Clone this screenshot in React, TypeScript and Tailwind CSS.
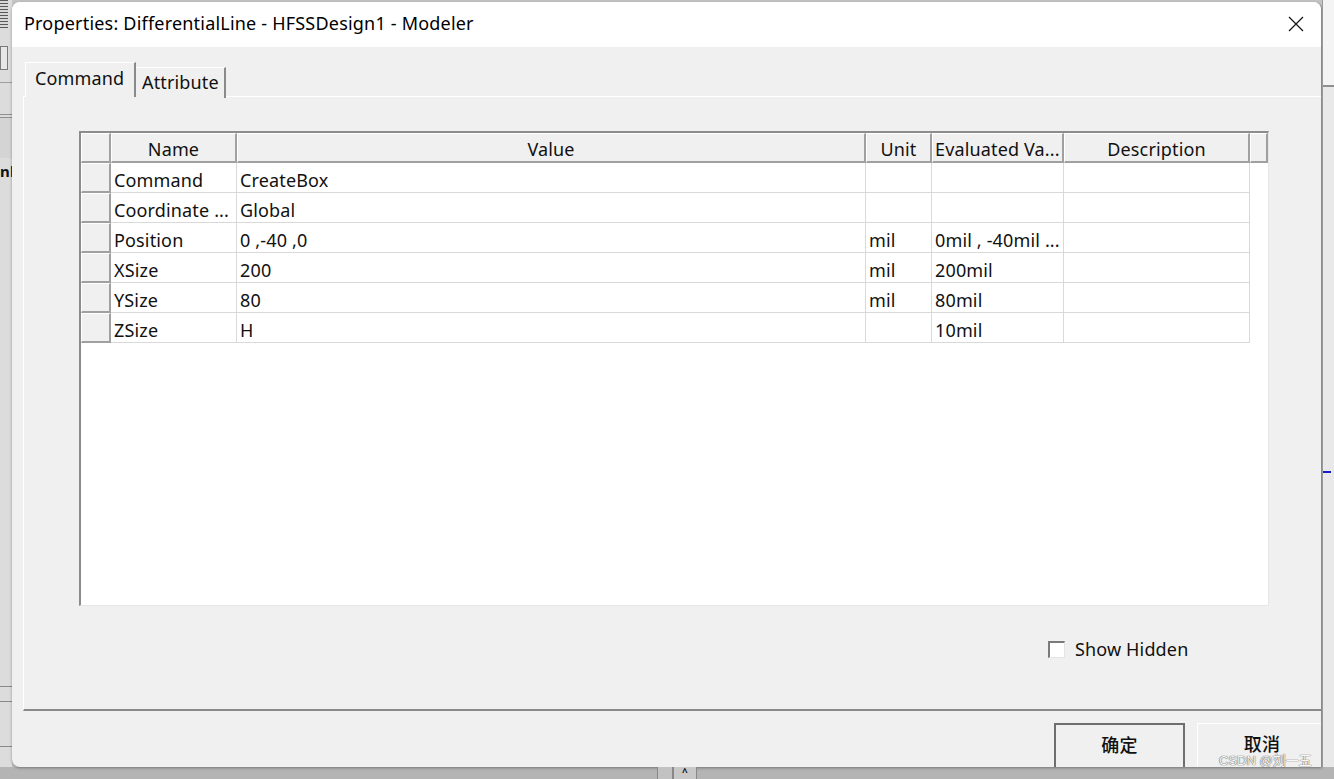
import React from "react";

const rows = [
  { name: "Command", value: "CreateBox", unit: "", ev: "" },
  { name: "Coordinate ...", value: "Global", unit: "", ev: "" },
  { name: "Position", value: "0 ,-40 ,0", unit: "mil", ev: "0mil , -40mil ..." },
  { name: "XSize", value: "200", unit: "mil", ev: "200mil" },
  { name: "YSize", value: "80", unit: "mil", ev: "80mil" },
  { name: "ZSize", value: "H", unit: "", ev: "10mil" },
];

function HeaderCell({ w, children, align = "center" }: { w: string; children?: React.ReactNode; align?: "center" | "left" }) {
  return (
    <div
      className={`${w} h-full shrink-0 flex items-center pt-[3px] overflow-hidden whitespace-nowrap bg-[#f0f0f0] border-t border-l border-t-white border-l-white border-r-2 border-b-2 border-r-[#a0a0a0] border-b-[#a0a0a0] ${align === "center" ? "justify-center" : "justify-start pl-[2px]"}`}
    >
      {children}
    </div>
  );
}

function Cell({ w, children }: { w: string; children?: React.ReactNode }) {
  return (
    <div className={`${w} h-full shrink-0 flex items-center pt-[4px] overflow-hidden whitespace-nowrap bg-white border-r border-b border-[#d9d9d9] pl-[3px]`}>
      {children}
    </div>
  );
}

export default function App() {
  return (
    <div className="relative w-[1334px] h-[779px] overflow-hidden bg-[#c4c4c4] text-[#111] tracking-[0.15px] font-['Noto_Sans','Noto_Sans_CJK_SC',sans-serif]">
      <div className="flex h-[767px]">
        {/* left desktop strip */}
        <div className="w-[12px] shrink-0 flex flex-col bg-[#dcdcdc]">
          <div className="h-[28px] bg-[repeating-linear-gradient(0deg,#5a5a5a_0px,#5a5a5a_1px,#d8d8d8_1px,#d8d8d8_3px)] w-[8px]" />
          <div className="h-[18px]" />
          <div className="h-[24px] w-[8px] border border-[#7a7a7a] bg-[#e6e6e6]" />
          <div className="h-[12px]" />
          <div className="h-[1px] bg-[#a0a0a0]" />
          <div className="h-[31px]" />
          <div className="h-[4px] border-y border-[#909090]" />
          <div className="h-[40px] bg-[#d4d4d4]" />
          <div className="h-[26px] flex items-center text-[15px] font-bold leading-none overflow-hidden">nl</div>
          <div className="flex-1" />
          <div className="h-[1px] bg-[#8a8a8a]" />
          <div className="h-[14px]" />
          <div className="h-[1px] bg-[#8a8a8a]" />
          <div className="h-[44px]" />
          <div className="h-[1px] bg-[#8a8a8a]" />
          <div className="h-[20px]" />
        </div>

        {/* dialog */}
        <div className="mt-[2px] w-[1310px] h-[765px] shrink-0 flex flex-col overflow-hidden rounded-t-[8px] rounded-bl-[8px] bg-[#f0f0f0] border-r border-r-[#8a8a8a] shadow-[0_1px_3px_rgba(0,0,0,0.35)]">
          {/* title bar */}
          <div className="h-[45px] shrink-0 bg-white flex items-center justify-between pl-[12px] pr-[17px]">
            <span className="text-[18px] leading-none text-black tracking-[0.2px] -mt-[3px]">Properties: DifferentialLine - HFSSDesign1 - Modeler</span>
            <svg width="16" height="16" viewBox="0 0 16 16" className="-mt-[1px]">
              <path d="M1 1 L15 15 M15 1 L1 15" stroke="#111" strokeWidth="1.2" fill="none" />
            </svg>
          </div>

          {/* body */}
          <div className="flex-1 flex flex-col pt-[16px] pl-[11px]">
            {/* tabs */}
            <div className="h-[34px] flex items-end pl-[2px] relative z-10 -mb-px">
              <div className="w-[111px] h-[35px] bg-[#f0f0f0] border-t border-l border-white border-r-2 border-r-[#8a8a8a] flex items-center pl-[9px] text-[18px] leading-none pb-[4px]">
                Command
              </div>
              <div className="w-[90px] h-[31px] bg-[#f0f0f0] border-t border-t-white border-r-2 border-r-[#8a8a8a] flex items-center pl-[6px] text-[18px] leading-none -mb-px pb-[3px]">
                Attribute
              </div>
            </div>

            {/* panel */}
            <div className="w-[1320px] h-[615px] shrink-0 bg-[#f0f0f0] border-t border-l border-white border-b-2 border-b-[#8a8a8a] pt-[34px] pl-[55px] flex flex-col">
              {/* property grid */}
              <div className="w-[1190px] h-[475px] shrink-0 bg-white border-t-2 border-l-2 border-t-[#8c8c8c] border-l-[#8c8c8c] border-r border-b border-r-[#e6e6e6] border-b-[#e6e6e6] flex flex-col text-[18px] leading-none">
                <div className="h-[30px] flex shrink-0">
                  <HeaderCell w="w-[30px]" />
                  <HeaderCell w="w-[126px]">Name</HeaderCell>
                  <HeaderCell w="w-[629px]">Value</HeaderCell>
                  <HeaderCell w="w-[66px]">Unit</HeaderCell>
                  <HeaderCell w="w-[132px]" align="left">Evaluated Va...</HeaderCell>
                  <HeaderCell w="w-[186px]">Description</HeaderCell>
                  <HeaderCell w="w-[18px]" />
                </div>
                {rows.map((r) => (
                  <div key={r.name} className="h-[30px] flex shrink-0">
                    <HeaderCell w="w-[30px]" />
                    <Cell w="w-[126px]">{r.name}</Cell>
                    <Cell w="w-[629px]">{r.value}</Cell>
                    <Cell w="w-[66px]">{r.unit}</Cell>
                    <Cell w="w-[132px]">{r.ev}</Cell>
                    <Cell w="w-[186px]">{""}</Cell>
                  </div>
                ))}
              </div>

              {/* show hidden */}
              <div className="mt-[33px] ml-[969px] flex items-center gap-[10px] h-[20px]">
                <div className="w-[17px] h-[17px] bg-white border-t-2 border-l-2 border-t-[#7a7a7a] border-l-[#7a7a7a] border-r border-b border-[#e4e4e4]" />
                <span className="text-[18px] leading-none">Show Hidden</span>
              </div>
            </div>

            {/* buttons */}
            <div className="mt-[12px] flex pl-[1031px] gap-[12px]">
              <div className="w-[131px] h-[48px] shrink-0 border-2 border-[#6e6e6e] bg-[#f0f0f0] flex items-start justify-center pt-[11px] text-[18px] leading-none font-medium">
                确定
              </div>
              <div className="w-[131px] h-[48px] shrink-0 border-t border-l border-white border-r-2 border-r-[#a0a0a0] bg-[#f0f0f0] flex items-start justify-center pt-[11px] text-[18px] leading-none font-medium">
                取消
              </div>
            </div>
          </div>
        </div>

        {/* right desktop strip */}
        <div className="w-[12px] shrink-0 flex flex-col bg-[#e9e9e9] border-l border-[#9a9a9a]">
          <div className="h-[85px] bg-[#f4f4f4]" />
          <div className="h-[2px] bg-[#8f8f8f]" />
          <div className="h-[384px]" />
          <div className="h-[2px] w-[8px] bg-[#1a1acc]" />
          <div className="flex-1" />
        </div>
      </div>

      {/* bottom desktop strip */}
      <div className="h-[12px] flex bg-[#b4b4b4]">
        <div className="w-[657px]" />
        <div className="w-[16px] h-full border-x border-[#888] bg-[#c2c2c2]" />
        <div className="w-[24px] h-full border-x border-[#888] bg-[#c8c8c8] flex justify-center text-[10px] leading-none font-bold">^</div>
      </div>

      {/* watermark */}
      <div className="absolute left-[1219px] top-[754px] text-[13px] leading-none tracking-normal text-[#f7f7f7] [text-shadow:0_0_1px_#555,0_0_1px_#555] font-['Liberation_Sans','Noto_Sans_CJK_SC',sans-serif]">
        CSDN @刘一五
      </div>
    </div>
  );
}
